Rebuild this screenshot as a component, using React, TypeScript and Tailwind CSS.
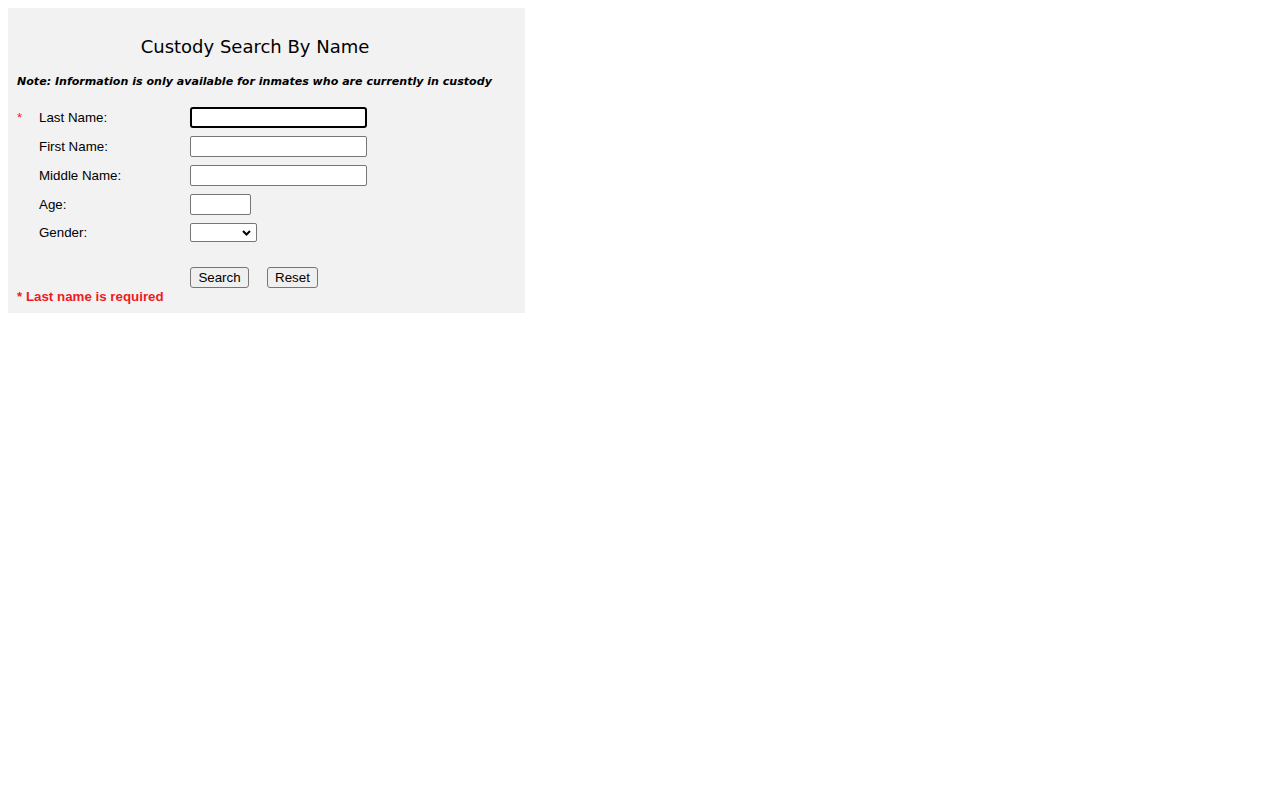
import React from "react";

const verdana = "font-['Verdana','DejaVu_Sans',sans-serif]";
const arial = "font-['Arial','Liberation_Sans',sans-serif]";

function Row({
  label,
  required = false,
  children,
}: {
  label: string;
  required?: boolean;
  children: React.ReactNode;
}) {
  return (
    <div className="flex h-[29px] items-center">
      <div className="w-[22px] text-[13.33px] text-[#ed1c24]">{required ? "*" : ""}</div>
      <div className="w-[151px] text-[13.33px] text-black">{label}</div>
      <div className="flex items-center">{children}</div>
    </div>
  );
}

export default function App() {
  return (
    <div className={`min-h-screen bg-white p-2 ${arial}`}>
      <div className="w-[517px] bg-[#f2f2f2] px-[9px] pt-[27px] pb-[8px]">
        <div className="w-[476px]">
          {/* Title */}
          <div className={`h-[24px] text-center text-[18px] leading-[24px] text-black ${verdana}`}>
            Custody Search By Name
          </div>

          {/* Note */}
          <div className={`mt-[16px] h-[14px] text-[11.07px] leading-[14px] font-bold italic text-black ${verdana}`}>
            Note: Information is only available for inmates who are currently in custody
          </div>
        </div>

        {/* Form */}
        <div className="mt-[14px]">
          <Row label="Last Name:" required>
            <input
              type="text"
              className="h-[21px] w-[177px] rounded-[3px] border-2 border-black bg-white px-1 text-[13px] outline-none"
            />
          </Row>
          <Row label="First Name:">
            <input
              type="text"
              className="h-[21px] w-[177px] rounded-[2px] border border-[#767676] bg-white px-1 text-[13px] outline-none"
            />
          </Row>
          <Row label="Middle Name:">
            <input
              type="text"
              className="h-[21px] w-[177px] rounded-[2px] border border-[#767676] bg-white px-1 text-[13px] outline-none"
            />
          </Row>
          <Row label="Age:">
            <input
              type="text"
              className="h-[21px] w-[61px] rounded-[2px] border border-[#767676] bg-white px-1 text-[13px] outline-none"
            />
          </Row>
          <div className="flex h-[27px] items-center">
            <div className="w-[22px]" />
            <div className="w-[151px] text-[13.33px] text-black">Gender:</div>
            <div className="relative h-[19px] w-[67px]">
              <select className="block h-[19px] w-[67px] appearance-none rounded-[2px] border border-[#767676] bg-white text-[13px] outline-none">
                <option value=""></option>
                <option value="M">Male</option>
                <option value="F">Female</option>
              </select>
              <svg
                className="pointer-events-none absolute right-[6px] top-[7px]"
                width="9"
                height="6"
                viewBox="0 0 9 6"
              >
                <path d="M1 1 L4.5 4.5 L8 1" fill="none" stroke="#000" strokeWidth="2" />
              </svg>
            </div>
          </div>

          {/* Buttons */}
          <div className="mt-[21px] flex pl-[173px]">
            <button className="h-[21px] w-[59px] rounded-[3px] border border-[#767676] bg-[#efefef] text-[13.33px] text-black">
              Search
            </button>
            <button className="ml-[18px] h-[21px] w-[51px] rounded-[3px] border border-[#767676] bg-[#efefef] text-[13.33px] text-black">
              Reset
            </button>
          </div>
        </div>

        {/* Footer */}
        <div className="mt-[1px] h-[16px] text-[13.33px] leading-[16px] font-bold text-[#ed1c24]">
          * Last name is required
        </div>
      </div>
    </div>
  );
}
